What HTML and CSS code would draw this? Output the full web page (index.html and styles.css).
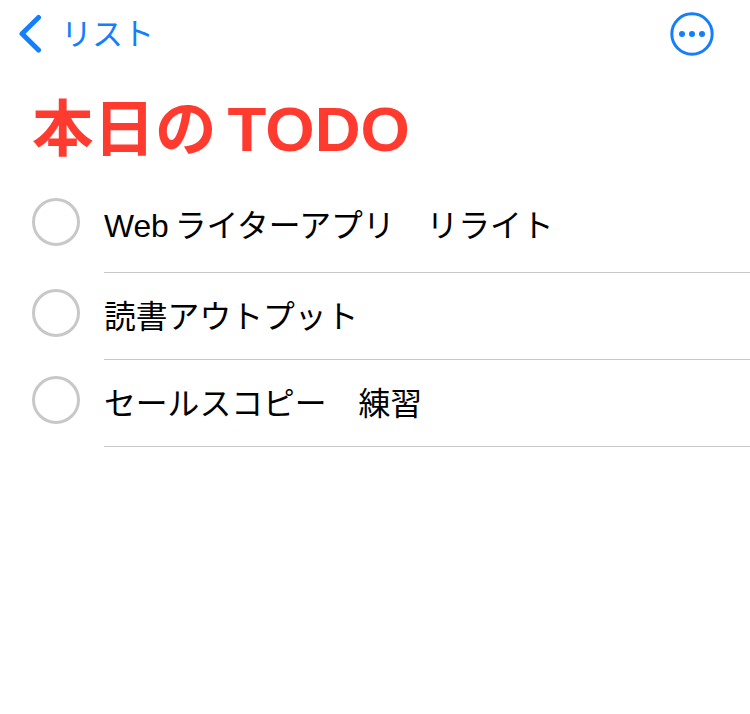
FILE: index.html
```html
<!DOCTYPE html>
<html lang="ja">

<head>
    <meta charset="UTF-8">
    <title>本日のTODO</title>
    <link rel="stylesheet" href="styles.css">
</head>

<body>
    <div class="container">
        <div class="nav-bar">
            <div class="nav-back">
                <svg class="back-icon" width="24" height="40" viewBox="0 0 24 40">
                    <path d="M21.5 3.5 L5 19.75 L21.5 36" fill="none" stroke="#147efb" stroke-width="5" stroke-linecap="round" stroke-linejoin="round"/>
                </svg>
                <span class="back-text">リスト</span>
            </div>
            <svg class="more-icon" width="44" height="44" viewBox="0 0 44 44">
                <circle cx="22" cy="22" r="20.2" fill="none" stroke="#147efb" stroke-width="3"/>
                <circle cx="12" cy="22" r="3" fill="#147efb"/>
                <circle cx="22" cy="22" r="3" fill="#147efb"/>
                <circle cx="32" cy="22" r="3" fill="#147efb"/>
            </svg>
        </div>

        <h1 class="title">本日の <span class="title-latin">TODO</span></h1>

        <div class="todo-list">
            <div class="todo-item">
                <span class="check"></span>
                <div class="todo-text">Web ライターアプリ　リライト</div>
            </div>
            <div class="todo-item">
                <span class="check"></span>
                <div class="todo-text">読書アウトプット</div>
            </div>
            <div class="todo-item">
                <span class="check"></span>
                <div class="todo-text">セールスコピー　練習</div>
            </div>
        </div>
    </div>
</body>

</html>
```

FILE: styles.css
```css
body {
    margin: 0;
    padding: 0;
    background: #fff;
    font-family: "Liberation Sans", "Noto Sans CJK JP", sans-serif;
}

.container {
    height: 714px;
    overflow: hidden;
}

.nav-bar {
    display: flex;
    justify-content: space-between;
    align-items: center;
    padding: 12px 36px 0 17px;
    height: 44px;
}

.nav-back {
    display: flex;
    align-items: center;
    gap: 20px;
}

.back-text {
    font-size: 31px;
    line-height: 38px;
    margin-top: 2px;
    color: #147efb;
}

.title {
    margin: 37px 0 0 32px;
    font-size: 61.5px;
    line-height: 72px;
    font-weight: bold;
    color: #ff3b30;
    word-spacing: -6px;
}

.title-latin {
    font-size: 63.5px;
}

.todo-list {
    margin-top: 20px;
}

.todo-item {
    display: flex;
    padding-left: 32px;
    gap: 24px;
    height: 87px;
}

.check {
    width: 48px;
    height: 48px;
    margin-top: 16px;
    border: 3px solid #c8c8c8;
    border-radius: 50%;
    box-sizing: border-box;
    flex-shrink: 0;
}

.todo-text {
    flex: 1;
    font-size: 31.8px;
    line-height: 48px;
    padding-top: 20px;
    color: #000;
    word-spacing: -3px;
    border-bottom: 1px solid #c8c8c8;
    box-sizing: border-box;
}

.todo-item:first-child .check {
    margin-top: 12px;
}

.todo-item:first-child .todo-text {
    padding-top: 16px;
}
```
